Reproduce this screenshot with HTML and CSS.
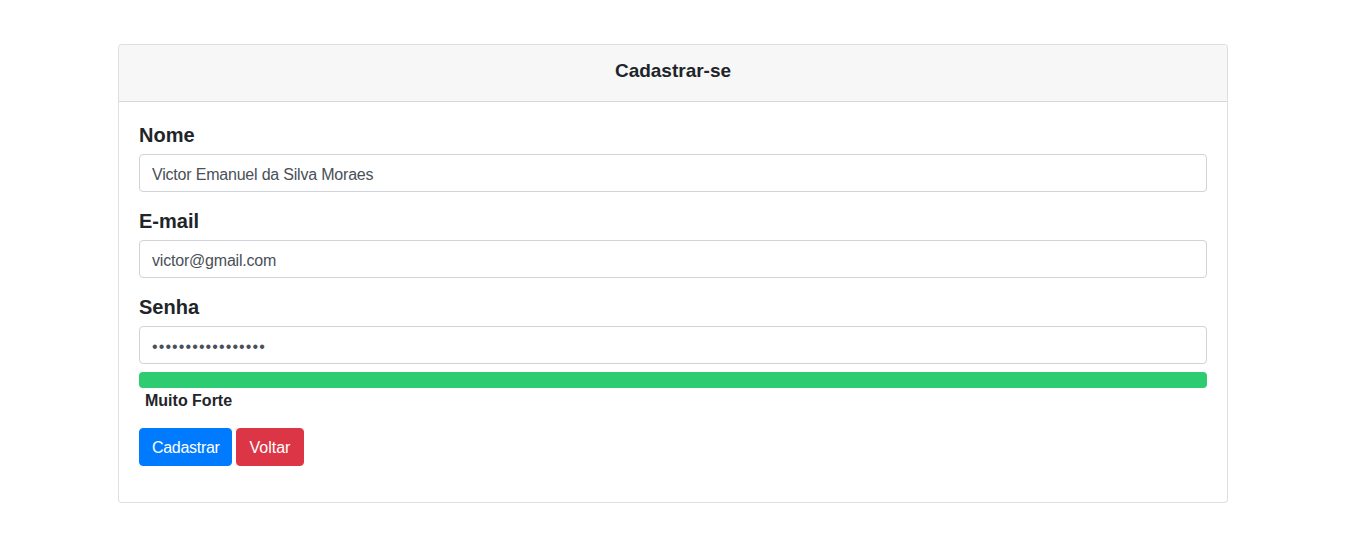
FILE: index.html
```html
<!DOCTYPE html>
<html lang="pt-BR">
<head>
<meta charset="utf-8">
<title>Cadastrar-se</title>
<link rel="stylesheet" href="styles.css">
</head>
<body>
<main class="page">
  <section class="card">
    <header class="card-header">Cadastrar-se</header>
    <form class="card-body">
      <div class="group">
        <label class="label" for="nome">Nome</label>
        <input class="input" id="nome" type="text" value="Victor Emanuel da Silva Moraes">
      </div>
      <div class="group">
        <label class="label" for="email">E-mail</label>
        <input class="input" id="email" type="email" value="victor@gmail.com">
      </div>
      <div class="group">
        <label class="label" for="senha">Senha</label>
        <input class="input input-password" id="senha" type="password" value="victorsenha123456">
        <div class="strength"><div class="strength-bar" style="width: 100%"></div></div>
        <div class="strength-text">Muito Forte</div>
      </div>
      <div class="actions">
        <button type="button" class="btn btn-primary">Cadastrar</button>
        <button type="button" class="btn btn-danger">Voltar</button>
      </div>
    </form>
  </section>
</main>
</body>
</html>
```
FILE: styles.css
```css
* { box-sizing: border-box; }
html, body { margin: 0; padding: 0; background: #fff; }
body {
  font-family: "Liberation Sans", Arial, sans-serif;
  color: #212529;
  font-size: 16px;
  line-height: 1.5;
}
.page {
  padding: 44px 0 0 118px;
}
.card {
  width: 1110px;
  border: 1px solid rgba(0,0,0,0.125);
  border-radius: 4px;
  background: #fff;
}
.card-header {
  background: #f7f7f7;
  border-bottom: 1px solid rgba(0,0,0,0.125);
  border-radius: 3px 3px 0 0;
  padding: 14px 20px 18px;
  text-align: center;
  font-size: 19px;
  font-weight: 600;
  line-height: 24px;
}
.card-body {
  padding: 20px;
  margin: 0;
}
.group { margin-bottom: 16px; display: flex; flex-direction: column; }
.label {
  font-size: 20px;
  font-weight: 600;
  line-height: 24px;
  padding-top: 1px;
  margin-bottom: 7px;
}
.input {
  height: 38px;
  padding: 8px 12px 4px;
  font-family: inherit;
  font-size: 16px;
  line-height: 24px;
  letter-spacing: -0.2px;
  color: #495057;
  border: 1px solid #ced4da;
  border-radius: 4px;
  background: #fff;
}
.input-password { letter-spacing: 1.1px; }
.strength {
  margin-top: 8px;
  height: 16px;
  border-radius: 4px;
  background: #e9ecef;
  overflow: hidden;
}
.strength-bar { height: 100%; background: #2ecc71; }
.strength-text {
  font-weight: 700;
  padding-left: 6px;
  line-height: 23px;
  margin-top: 1px;
}
.actions { display: flex; gap: 4px; margin-bottom: 16px; }
.btn {
  height: 38px;
  padding: 7px 12px 5px;
  font-family: inherit;
  font-size: 16px;
  line-height: 24px;
  color: #fff;
  border: 1px solid transparent;
  border-radius: 4px;
  cursor: pointer;
}
.btn-primary { width: 93px; letter-spacing: -0.3px; background: #007bff; border-color: #007bff; }
.btn-danger { width: 68px; background: #dc3545; border-color: #dc3545; }
```
